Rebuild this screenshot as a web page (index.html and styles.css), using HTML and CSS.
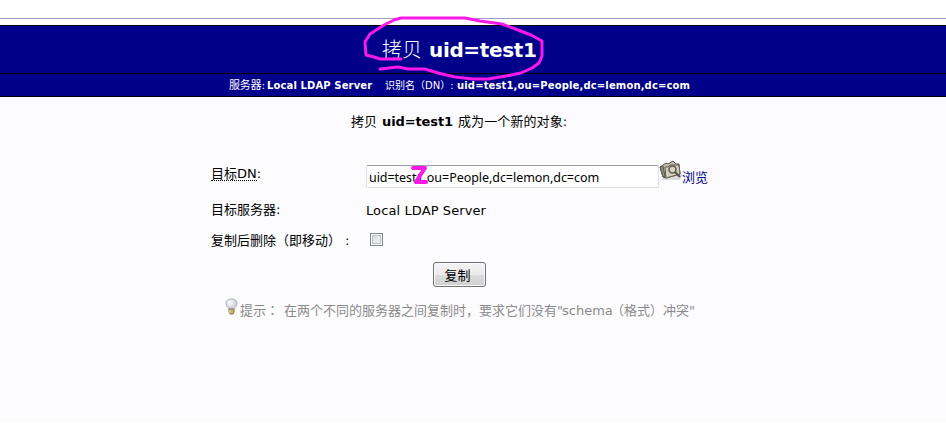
FILE: index.html
```html
<!DOCTYPE html>
<html lang="zh-CN">
<head>
<meta charset="utf-8">
<title>拷贝 uid=test1</title>
<link rel="stylesheet" href="styles.css">
</head>
<body>
<div class="topline"></div>
<header>
  <h1><span class="verb">拷贝</span><b>uid=test1</b></h1>
  <div class="subtitle"><span class="server-label">服务器:</span><b class="server">Local LDAP Server</b><span class="dn-label">识别名（DN）:</span><b class="dn">uid=test1,ou=People,dc=lemon,dc=com</b></div>
</header>
<main>
  <p class="intro"><span class="intro-verb">拷贝</span><b>uid=test1</b><span>成为一个新的对象:</span></p>
  <form>
    <div class="row target"><label><abbr>目标DN</abbr>:</label><input type="text" value="uid=test1,ou=People,dc=lemon,dc=com"><svg class="folder" width="24" height="22" viewBox="0 0 24 22"><path d="M3 20L21 20L23 16L20 7L7 8Z" fill="#aaa" opacity=".4"/><path d="M1 7L7 3L9 4L14 1L17 4L20 4L21 14L7 18L4 17Z" fill="#c4bda5" stroke="#55534a"/><path d="M1 7L4 6L6 17L4 17Z" fill="#9b9686" stroke="#55534a"/><path d="M6 7L9 7L11 5L20 5L21 14L7 18Z" fill="#d5ceb8" stroke="#625f54"/><circle cx="13.5" cy="9.5" r="3.5" fill="#d9d3bf" stroke="#5d5b53" stroke-width="1.6"/><path d="M16 12L21 17" stroke="#55544f" stroke-width="2.2"/></svg><a>浏览</a></div>
    <div class="row server-row"><label>目标服务器:</label><span class="server-name">Local LDAP Server</span></div>
    <div class="row remove-row"><label>复制后删除（即移动）<span class="colon">:</span></label><input type="checkbox"></div>
    <button type="button">复制</button>
  </form>
  <div class="hint"><svg width="14" height="18" viewBox="0 0 14 18"><defs><radialGradient id="glass" cx="35%" cy="35%"><stop stop-color="#fff"/><stop offset="1" stop-color="#d1d5e0"/></radialGradient></defs><path d="M4 11C3 9 1 8 1 5.5C1 2.5 3.5 1 6.5 1S12 2.5 12 5.5C12 8 10 9 9 11Z" fill="url(#glass)" stroke="#a9abb5"/><path d="M4 11H9V14L8 16H5L4 14Z" fill="#c7b064" stroke="#8b7b4c"/><path d="M5 12V15" stroke="#f2e6a7"/></svg><span class="tip">提示<span lang="zh-TW" class="wide-colon">：</span></span><span class="tip-text">在两个不同的服务器之间复制时，要求它们没有"</span><span class="schema">schema</span><span class="format">（格式）冲突"</span></div>
</main>
<svg class="ink" width="946" height="423" viewBox="0 0 946 423"><path d="M401 59H380L374 57L366 55L365 42L370 34L384 25L394 20L401 18H465L480 21L502 24L518 30L531 35L542 41V56L539 63L532 68L521 73L506 76L488 79H473L455 77L438 73L425 69H408L398 67L380 69"/><path class="two" d="M413 168H425L421 174L416 182H426"/></svg>
</body>
</html>
```
FILE: styles.css
```css
* { box-sizing: border-box; }
body {
  margin: 0;
  height: 423px;
  overflow: hidden;
  position: relative;
  background: #fff;
  color: #000;
  font: 13px/18px "DejaVu Sans", "Noto Sans CJK SC", sans-serif;
  white-space: nowrap;
}
.topline { height: 25px; border-top: 1px solid #9a9acb; margin-top: 18px; margin-bottom: -18px; }
header { height: 72px; background: #00008b; border: solid #000; border-width: 1px 0; color: #fff; }
h1 { height: 48px; margin: 0; padding-left: 382px; display: flex; line-height: 48px; font-size: 20px; font-weight: 400; border-bottom: 1px solid #000; }
.verb { width: 47px; font-weight: 300; }
h1 b { letter-spacing: -.35px; }
.subtitle { height: 22px; display: flex; padding-left: 229px; font-size: 10px; line-height: 24px; }
.server-label { width: 38px; font-size: 11px; letter-spacing: -.2px; }
.server { width: 118px; letter-spacing: .12px; }
.dn-label { width: 72px; font-size: 10px; }
.dn { letter-spacing: .14px; }
main { height: 325px; background: #fcfcfe; }
.intro { height: 18px; margin: 0; padding-left: 351px; display: flex; position: relative; top: 16px; }
.intro-verb { width: 31px; }
.intro b { width: 76px; letter-spacing: -.1px; }
.intro span:last-child { letter-spacing: .1px; }
form { padding-top: 50px; }
.row { display: flex; padding-left: 211px; }
label { width: 155px; flex: none; }
.target { height: 36px; }
abbr { border-bottom: 1px dotted #000; display: inline-block; height: 16px; line-height: 18px; }
input[type=text] { width: 293px; height: 23px; border: 1px solid #dfe0e6; border-top-color: #9b9ca5; border-radius: 2px; padding: 3px 2px 1px; font: 12.5px "Noto Sans", sans-serif; letter-spacing: -.05px; background: #fff; }
.folder { margin-top: -5px; flex: none; }
a { color: #00008b; margin-top: 4px; margin-left: -1px; }
.server-row { height: 31px; }
.server-name { margin-top: 1px; letter-spacing: .1px; }
.remove-row { height: 30px; }
.colon { margin-left: 4px; }
input[type=checkbox] { appearance: none; width: 13px; height: 13px; margin: 1px 0 0 4px; border: 1px solid #858585; box-shadow: inset 0 0 0 1px #fafafa, inset 0 0 0 2px #bbc0c4; background: linear-gradient(135deg, #d1d5d9, #fafafa); }
button { display: block; margin: 0 0 0 433px; width: 53px; height: 25px; padding: 0 4px 0 0; border: 1px solid #707070; border-radius: 3px; box-shadow: inset 0 0 0 1px #fafafa; background: linear-gradient(#f3f3f3, #ebebeb 50%, #ddd 51%, #cfcfcf); font: 13px "Noto Sans CJK SC", sans-serif; }
.hint { display: flex; padding: 11px 0 0 225px; color: #8a8a8a; line-height: 25px; }
.hint svg { width: 14px; height: 18px; margin-right: 1px; }
.tip { width: 44px; }
.wide-colon { font-family: "Noto Sans CJK TC", sans-serif; line-height: 1; }
.tip-text { width: 278px; }
.schema { width: 49px; }
.ink { position: absolute; left: 0; top: 0; pointer-events: none; fill: none; stroke: #fa19e9; stroke-width: 3; stroke-linecap: round; stroke-linejoin: round; }
.two { stroke-width: 4; }
```
